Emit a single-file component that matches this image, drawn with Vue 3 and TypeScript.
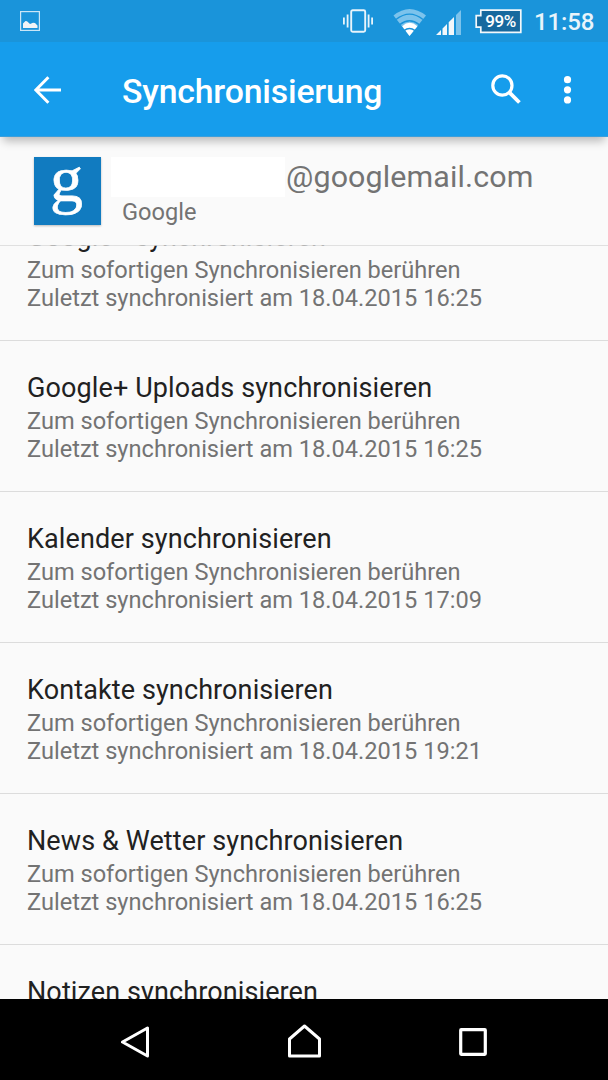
<script setup lang="ts">
interface SyncItem {
  title: string
  time: string
}

const hint = 'Zum sofortigen Synchronisieren berühren'
const items: SyncItem[] = [
  { title: 'Google+ synchronisieren', time: '18.04.2015 16:25' },
  { title: 'Google+ Uploads synchronisieren', time: '18.04.2015 16:25' },
  { title: 'Kalender synchronisieren', time: '18.04.2015 17:09' },
  { title: 'Kontakte synchronisieren', time: '18.04.2015 19:21' },
  { title: 'News & Wetter synchronisieren', time: '18.04.2015 16:25' },
  { title: 'Notizen synchronisieren', time: '18.04.2015 16:25' },
]
</script>

<template>
  <div class="screen">
    <header class="status">
      <svg class="picture" width="20" height="20" viewBox="0 0 20 20">
        <rect x=".6" y=".6" width="18.8" height="18.8" fill="none" stroke="#c9e6f7" stroke-width="1.2" />
        <path d="M3 17V12.5L5.5 10L7 10.2L10 13L13 11.7L15 12L17.5 14.5V17Z" fill="#f1f4f6" />
      </svg>
      <svg class="vibrate" width="30" height="24" viewBox="0 0 30 24">
        <rect x="8.2" y="1.2" width="14" height="21.6" rx="1.5" fill="none" stroke="#e8f4fb" stroke-width="1.9" />
        <path d="M.9 8.5V15.5M4.6 5.5V18.5M25.6 5.5V18.5M29.1 8.5V15.5" stroke="#e8f4fb" stroke-width="1.8" />
      </svg>
      <svg class="wifi" width="34" height="28" viewBox="0 0 34 28">
        <path d="M.5 7.5Q16.5 -5.5 33 7.5L16.5 28Z" fill="#7cc3ec" />
        <path d="M9.2 18.2Q16.5 11.5 24.4 18.2L16.5 28Z" fill="#fff" />
        <path d="M3 11.5Q16.5 .8 30 11.5M6.8 16.6Q16.5 9 26.2 16.6M11 22.6Q16.5 18.4 22 22.6" fill="none" stroke="#1a94da" stroke-width="1.4" />
      </svg>
      <svg class="signal" width="26" height="26" viewBox="0 0 26 26">
        <path d="M0 26L5 21V26ZM6.5 26V19.5L11 15V26ZM12.7 26V13.3L18 8V26Z" fill="#f2f7fa" />
        <path d="M20 26V6L25 1V26Z" fill="#7cc3ec" />
      </svg>
      <div class="battery">
        <svg width="47" height="25" viewBox="0 0 47 25">
          <path d="M5.8 1.2H45.8V23.3H5.8V18.2H1.2V6.6H5.8Z" fill="#17699e" stroke="#f3f8fb" stroke-width="1.7" />
        </svg>
        <span class="percent">99%</span>
      </div>
      <span class="clock">11:58</span>
    </header>

    <div class="toolbar">
      <svg class="back" width="28" height="28" viewBox="0 0 28 28">
        <path d="M14.4 1.3L1.8 14L14.4 26.7M2 14H27" fill="none" stroke="#fff" stroke-width="3" />
      </svg>
      <h1>Synchronisierung</h1>
      <svg class="search" width="31" height="31" viewBox="0 0 31 31">
        <circle cx="11.4" cy="11.5" r="9.6" fill="none" stroke="#fff" stroke-width="3.2" />
        <path d="M18.8 18.9L28.4 28.5" stroke="#fff" stroke-width="3.8" />
      </svg>
      <svg class="more" width="9" height="28" viewBox="0 0 9 28">
        <circle cx="4.5" cy="3.7" r="3.6" fill="#fff" />
        <circle cx="4.5" cy="13.8" r="3.6" fill="#fff" />
        <circle cx="4.5" cy="23.9" r="3.6" fill="#fff" />
      </svg>
    </div>

    <section class="account">
      <div class="logo">
        <svg width="67" height="68" viewBox="0 0 67 68">
          <text x="16" y="44" class="mark">g</text>
        </svg>
      </div>
      <div class="identity">
        <div class="mail"><span class="blank"></span><span class="domain">@googlemail.com</span></div>
        <div class="provider">Google</div>
      </div>
    </section>

    <main class="viewport">
      <ul class="list">
        <li v-for="item in items" :key="item.title" class="item">
          <div class="title">{{ item.title }}</div>
          <div class="sub">{{ hint }}</div>
          <div class="sub">Zuletzt synchronisiert am {{ item.time }}</div>
        </li>
      </ul>
    </main>

    <nav class="navbar">
      <svg width="30" height="32" viewBox="0 0 30 32">
        <path d="M2.5 16L27.5 2V30Z" fill="none" stroke="#fff" stroke-width="3" stroke-linejoin="round" />
      </svg>
      <svg width="34" height="34" viewBox="0 0 34 34">
        <path d="M2.5 15L17.5 2L32.5 15V32H2.5Z" fill="none" stroke="#fff" stroke-width="3" stroke-linejoin="round" />
      </svg>
      <svg width="28" height="28" viewBox="0 0 28 28">
        <rect x="1.7" y="1.7" width="24.6" height="24.6" rx=".5" fill="none" stroke="#fff" stroke-width="3.2" />
      </svg>
    </nav>
  </div>
</template>

<style>
body {
  margin: 0;
  overflow: hidden;
}
</style>

<style scoped>
.screen {
  width: 608px;
  height: 1080px;
  display: flex;
  flex-direction: column;
  overflow: hidden;
  background: #fafafa;
  font-family: Roboto, "Liberation Sans", sans-serif;
}
svg {
  display: block;
  flex: none;
}
.status {
  height: 42px;
  flex: none;
  display: flex;
  align-items: flex-start;
  background: #1a94da;
}
.picture { margin: 11px 0 0 20px; }
.vibrate { margin: 9px 0 0 303px; }
.wifi { margin: 8px 0 0 20px; }
.signal { margin: 9px 0 0 9px; }
.battery {
  display: grid;
  margin: 9px 0 0 13px;
  width: 47px;
  height: 25px;
}
.battery > * { grid-area: 1 / 1; }
.percent {
  padding-left: 4px;
  text-align: center;
  font-size: 17px;
  line-height: 24px;
  font-weight: 500;
  letter-spacing: -0.4px;
  color: #fff;
}
.clock {
  margin-left: 12px;
  font-size: 24px;
  line-height: 45px;
  font-weight: 500;
  letter-spacing: -0.1px;
  color: #e8f4fb;
}
.toolbar {
  position: relative;
  height: 95px;
  box-sizing: border-box;
  flex: none;
  display: flex;
  align-items: flex-start;
  background: #169dec;
  border-bottom: 1px solid #3c9fdb;
  box-shadow: 0 7px 9px -3px rgba(0, 0, 0, 0.27);
}
.back { margin: 34px 0 0 34px; }
h1 {
  width: 369px;
  margin: 30px 0 0 60px;
  font-size: 33.8px;
  line-height: 40px;
  font-weight: 500;
  letter-spacing: -0.18px;
  color: #fff;
}
.search { margin-top: 32px; }
.more { margin: 34px 0 0 41px; }
.account {
  height: 108px;
  flex: none;
  display: flex;
}
.logo {
  width: 67px;
  height: 68px;
  margin: 20px 0 0 34px;
  background: #117bc0;
  box-shadow: 0 1px 2px #bbb;
}
.mark {
  font-family: "Liberation Serif", serif;
  font-size: 66px;
  fill: #fff;
  stroke: #fff;
  stroke-width: 0.6px;
}
.identity {
  margin: 20px 0 0 10px;
}
.mail {
  display: flex;
  height: 40px;
}
.blank {
  width: 174px;
  height: 40px;
  background: #fff;
}
.domain {
  margin-left: 1px;
  font-size: 30.4px;
  line-height: 39px;
  letter-spacing: 0.14px;
  color: #737373;
}
.provider {
  margin-left: 11px;
  font-size: 23.6px;
  line-height: 30px;
  color: #737373;
}
.viewport {
  position: relative;
  height: 754px;
  flex: none;
  overflow: hidden;
}
.viewport::before {
  content: "";
  position: absolute;
  top: 0;
  left: 0;
  right: 0;
  height: 1px;
  background: rgba(218, 218, 218, 0.8);
}
.list {
  list-style: none;
  margin: 0;
  padding: 0;
}
.item {
  height: 151px;
  box-sizing: border-box;
  padding: 29px 27px 0;
  border-bottom: 1px solid #dcdcdc;
}
.item:first-child {
  margin-top: -55px;
}
.title {
  margin-bottom: 1px;
  font-size: 27px;
  line-height: 36px;
  letter-spacing: 0.11px;
  color: #212121;
  white-space: nowrap;
}
.sub {
  font-size: 23.6px;
  line-height: 28px;
  color: #737373;
  white-space: nowrap;
}
.navbar {
  flex: 1;
  display: flex;
  align-items: flex-start;
  background: #000;
  padding: 25px 0 0 120px;
  gap: 137px;
}
.navbar svg:nth-child(1) { margin-top: 2px; }
.navbar svg:nth-child(3) { margin: 4px 0 0 1px; }
</style>
